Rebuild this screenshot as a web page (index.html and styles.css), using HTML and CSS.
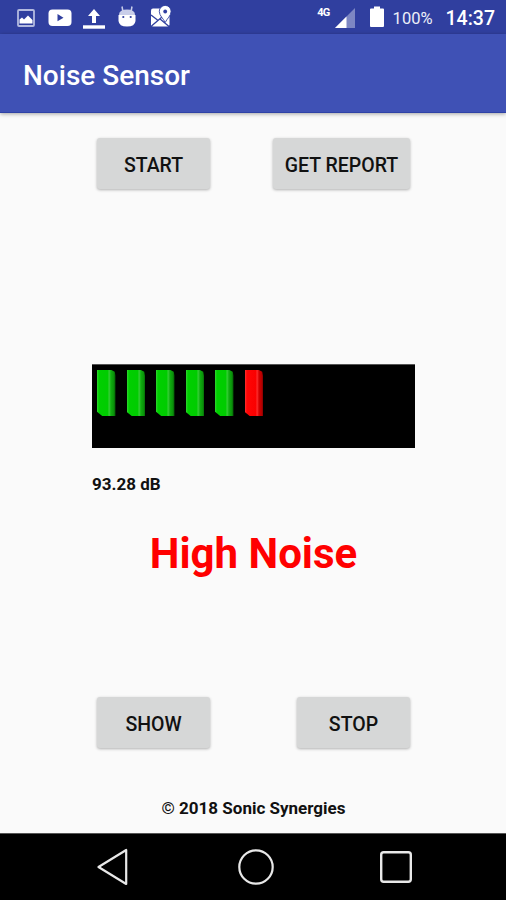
FILE: index.html
```html
<!DOCTYPE html>
<html lang="en">
<head>
    <meta charset="UTF-8">
    <meta name="viewport" content="width=device-width, initial-scale=1.0">
    <title>Noise Sensor</title>
    <link rel="stylesheet" href="styles.css">
</head>
<body>

    <!-- Status bar -->
    <div class="status-bar">
        <div class="notifications">
            <svg class="icon-image" width="18" height="18" viewBox="0 0 18 18">
                <rect x="1" y="1" width="16" height="16" rx="1" fill="none" stroke="#b3badf" stroke-width="1.8"/>
                <path d="M2.5 14.5V10.5L5 8.5L7 10.5L11 6.5L15.5 11V14.5Z" fill="#fff"/>
            </svg>
            <svg class="icon-video" width="24" height="18" viewBox="0 0 24 18">
                <rect x="0.5" y="0.5" width="23" height="16.5" rx="4" fill="#fff"/>
                <path d="M9.5 5L15.5 8.7L9.5 12.3Z" fill="#303f9f"/>
            </svg>
            <svg class="icon-upload" width="22" height="21" viewBox="0 0 22 21">
                <path d="M11 0L17 7H13V14H9V7H5Z" fill="#fff"/>
                <rect x="0" y="16.3" width="22" height="3.4" fill="#fff"/>
            </svg>
            <svg class="icon-android" width="18" height="21" viewBox="0 0 18 21">
                <path d="M4 0.5L4.8 5M14 0.5L13.2 5" stroke="#c9cee9" stroke-width="1.5"/>
                <path d="M1 9Q1 3.5 9 3.5T17 9Z" fill="#c9cee9"/>
                <path d="M0.5 9H17.5V15Q17 20.5 9 20.5T0.5 15Z" fill="#fff"/>
                <circle cx="5.3" cy="11" r="1.1" fill="#303f9f"/>
                <circle cx="12.7" cy="11" r="1.1" fill="#303f9f"/>
            </svg>
            <svg class="icon-map" width="22" height="22" viewBox="0 0 22 22">
                <rect x="1" y="3.5" width="18.5" height="18" rx="2" fill="#fff"/>
                <path d="M1 10L7.5 15M1.5 21L12 12M9.5 13.5L19 21.5" stroke="#303f9f" stroke-width="1.3"/>
                <path d="M15.2 17.5C13.5 13.5 9.3 11 9.3 6.3A5.9 5.9 0 0 1 21.1 6.3C21.1 11 17 13.5 15.2 17.5Z" fill="#fff" stroke="#303f9f" stroke-width="0.9"/>
                <circle cx="15.2" cy="6.5" r="1.9" fill="#303f9f"/>
            </svg>
        </div>
        <div class="system">
            <span class="network">4G</span>
            <svg class="icon-signal" width="20" height="20" viewBox="0 0 20 20">
                <path d="M20 0V20H0Z" fill="#7d87c3"/>
                <path d="M11.5 8.5V20H0Z" fill="#fff"/>
            </svg>
            <svg class="icon-battery" width="14" height="21" viewBox="0 0 14 21">
                <path d="M4 0.5H10V2.5H13Q14 2.5 14 3.5V20Q14 21 13 21H1Q0 21 0 20V3.5Q0 2.5 1 2.5H4Z" fill="#fff"/>
            </svg>
            <span class="percent">100%</span>
            <span class="clock">14:37</span>
        </div>
    </div>

    <!-- App bar -->
    <header class="app-bar">
        <h1>Noise Sensor</h1>
    </header>

    <main class="content">
        <div class="button-row">
            <button>START</button>
            <button class="wide">GET REPORT</button>
        </div>

        <!-- Level meter -->
        <div class="meter">
            <span class="bar"></span>
            <span class="bar"></span>
            <span class="bar"></span>
            <span class="bar"></span>
            <span class="bar"></span>
            <span class="bar high"></span>
        </div>
        <p class="level">93.28 dB</p>
        <p class="result">High Noise</p>

        <div class="button-row bottom-row">
            <button>SHOW</button>
            <button>STOP</button>
        </div>
        <p class="copyright">© 2018 Sonic Synergies</p>
    </main>

    <!-- Navigation bar -->
    <nav class="nav-bar">
        <svg width="32" height="40" viewBox="0 0 32 40">
            <path d="M29.2 3V37L1.5 20Z" fill="none" stroke="#e8e8e8" stroke-width="2.2" stroke-linejoin="round"/>
        </svg>
        <svg class="icon-home" width="36" height="36" viewBox="0 0 36 36">
            <circle cx="18" cy="18" r="16.7" fill="none" stroke="#e8e8e8" stroke-width="2.2"/>
        </svg>
        <svg width="32" height="32" viewBox="0 0 32 32">
            <rect x="1.2" y="1.2" width="29.6" height="29.6" rx="2.5" fill="none" stroke="#e8e8e8" stroke-width="2.4"/>
        </svg>
    </nav>

</body>
</html>
```
FILE: styles.css
```css
* {
    box-sizing: border-box;
}

body {
    margin: 0;
    height: 900px;
    display: flex;
    flex-direction: column;
    font-family: Roboto, sans-serif;
    background-color: #fafafa;
    overflow: hidden;
}

h1, p {
    margin: 0;
}

svg {
    display: block;
    flex-shrink: 0;
}

.status-bar {
    height: 34px;
    display: flex;
    justify-content: space-between;
    background-color: #303f9f;
    color: #ffffff;
    padding: 0 11px 0 17px;
}

.notifications, .system {
    display: flex;
    align-items: flex-start;
}

.icon-image {
    margin-top: 9px;
}

.icon-video {
    margin: 9px 0 0 13px;
}

.icon-upload {
    margin: 9px 0 0 11px;
}

.icon-android {
    margin: 6px 0 0 13px;
}

.icon-map {
    margin: 5px 0 0 14px;
}

.network {
    margin-top: 7px;
    font-size: 11px;
    line-height: 12px;
    font-weight: 700;
    letter-spacing: -0.7px;
}

.icon-signal {
    margin: 8px 0 0 5px;
}

.icon-battery {
    margin: 6px 0 0 15px;
}

.percent {
    margin: 0 0 0 9px;
    font-size: 16.5px;
    line-height: 38px;
    color: #eceef8;
}

.clock {
    margin-left: 13px;
    font-size: 19.5px;
    line-height: 38px;
    font-weight: 500;
}

.app-bar {
    height: 79px;
    display: flex;
    align-items: center;
    padding: 4px 23px 0;
    background-color: #3f51b5;
    border-bottom: 1px solid #2f42a6;
    box-shadow: 0 1px 4px rgba(0, 0, 0, 0.35);
}

h1 {
    color: #ffffff;
    font-size: 28px;
    font-weight: 500;
}

.content {
    flex: 1;
    display: flex;
    flex-direction: column;
    padding: 25px 91px 0 92px;
    color: #111111;
}

.button-row {
    display: flex;
    justify-content: space-between;
    padding: 0 5px;
}

button {
    width: 113px;
    height: 51px;
    padding: 4px 0 0;
    font-family: inherit;
    font-size: 19.5px;
    font-weight: 500;
    color: #111111;
    background-color: #d6d7d7;
    border: none;
    border-radius: 3px;
    box-shadow: 0 1px 3px rgba(0, 0, 0, 0.3);
}

button.wide {
    width: 137px;
}

.meter {
    height: 84px;
    display: flex;
    align-items: flex-start;
    gap: 11px;
    margin-top: 175px;
    padding: 5px;
    background-color: #000000;
    border-top: 1px solid #555555;
}

/* Front face and darker side face of one block */
.bar {
    width: 18.5px;
    height: 46px;
    background: linear-gradient(90deg, #32d632 0, #00cf00 2px, #00cc00 11px, #38d038 12px, #0fae0f 14px, #0a8f0a 17px, #055005 18.5px);
    clip-path: polygon(0 0, 78% 0, 96% 4%, 100% 12%, 100% 100%, 28% 100%, 0 91%);
}

.bar.high {
    background: linear-gradient(90deg, #ff3030 0, #ff0505 2px, #fa0000 11px, #ff3030 12px, #d40000 14px, #b00000 17px, #600000 18.5px);
}

.level {
    margin-top: 25px;
    font-size: 17px;
    line-height: 22px;
    font-weight: 700;
}

.result {
    margin-top: 34px;
    font-size: 42px;
    line-height: 50px;
    font-weight: 700;
    text-align: center;
    color: #ff0000;
}

.bottom-row {
    margin-top: 118px;
}

.copyright {
    margin-top: 49px;
    font-size: 17px;
    line-height: 22px;
    font-weight: 700;
    text-align: center;
}

.nav-bar {
    height: 67px;
    display: flex;
    align-items: center;
    justify-content: space-between;
    padding: 0 94px 0 97px;
    background-color: #000000;
    border-top: 1px solid #555555;
}

.icon-home {
    margin-left: 2px;
}
```
